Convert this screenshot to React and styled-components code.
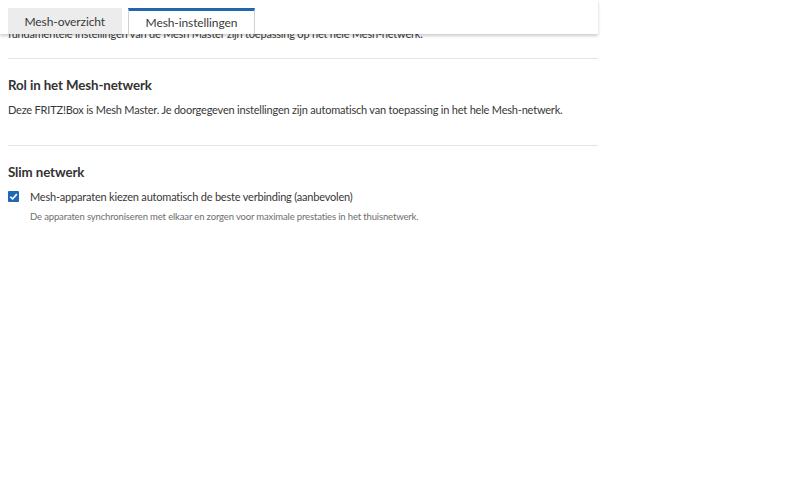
import React from 'react';
import styled, { createGlobalStyle } from 'styled-components';

const GlobalStyle = createGlobalStyle`
  html, body {
    margin: 0;
    padding: 0;
    background: #fff;
  }
  body {
    font-family: Lato, "Liberation Sans", sans-serif;
    color: #3c3c3c;
  }
`;

const Page = styled.div`
  position: relative;
  width: 800px;
  height: 497px;
  overflow: hidden;
`;

const Header = styled.div`
  position: absolute;
  top: 0;
  left: 0;
  width: 598px;
  height: 34px;
  background: #fff;
  box-shadow: 0 2px 3px rgba(0, 0, 0, 0.2);
  display: flex;
  align-items: flex-end;
  gap: 6px;
  padding-left: 8px;
  box-sizing: border-box;
  z-index: 2;
`;

const Tab = styled.div`
  height: 26px;
  box-sizing: border-box;
  padding: 0 ${(p) => (p.active ? '17px' : '16.5px')};
  display: flex;
  align-items: center;
  font-size: 12px;
  letter-spacing: -0.1px;
  color: #3a3a3a;
  background: ${(p) => (p.active ? '#fff' : '#ececec')};
  border-left: ${(p) => (p.active ? '1px solid #d2d2d2' : 'none')};
  border-right: ${(p) => (p.active ? '1px solid #d2d2d2' : 'none')};
  border-top: ${(p) => (p.active ? '3px solid #2266b0' : 'none')};
`;

const Content = styled.div`
  width: 590px;
  padding-left: 8px;
  padding-top: 26px;
`;

const Section = styled.section`
  border-bottom: ${(p) => (p.last ? 'none' : '1px solid #e4e4e4')};
  padding-bottom: ${(p) => p.pb || 0}px;
`;

const Text = styled.p`
  margin: ${(p) => p.mt || 0}px 0 0;
  font-size: 11px;
  letter-spacing: -0.2px;
  line-height: 16px;
  white-space: nowrap;
  color: #383838;
`;

const Heading = styled.h2`
  margin: 17px 0 0;
  font-size: 13.3px;
  font-weight: 700;
  line-height: 18px;
  letter-spacing: -0.1px;
  color: #333;
`;

const CheckRow = styled.label`
  display: flex;
  align-items: center;
  gap: 11px;
  margin-top: 7px;
  height: 16px;
  font-size: 11px;
  letter-spacing: -0.2px;
  color: #383838;
`;

const Box = styled.span`
  width: 11px;
  height: 11px;
  border-radius: 1px;
  background: #1f68b3;
  display: flex;
  align-items: center;
  justify-content: center;
`;

const Hint = styled.div`
  margin: 6px 0 0 22px;
  line-height: 14px;
  font-size: 9.5px;
  letter-spacing: -0.15px;
  color: #6e6e6e;
`;

export default function App() {
  return (
    <Page>
      <GlobalStyle />
      <Header>
        <Tab>Mesh-overzicht</Tab>
        <Tab active>Mesh-instellingen</Tab>
      </Header>
      <Content>
        <Section pb={16}>
          <Text>fundamentele instellingen van de Mesh Master zijn toepassing op het hele Mesh-netwerk.</Text>
        </Section>
        <Section pb={27}>
          <Heading>Rol in het Mesh-netwerk</Heading>
          <Text mt={8}>
            Deze FRITZ!Box is Mesh Master. Je doorgegeven instellingen zijn automatisch van toepassing in het hele Mesh-netwerk.
          </Text>
        </Section>
        <Section last>
          <Heading>Slim netwerk</Heading>
          <CheckRow>
            <Box>
              <svg width="9" height="9" viewBox="0 0 10 10">
                <path d="M1.4 5.3 L4 7.7 L8.7 2.4" fill="none" stroke="#fff" strokeWidth="1.8" />
              </svg>
            </Box>
            Mesh-apparaten kiezen automatisch de beste verbinding (aanbevolen)
          </CheckRow>
          <Hint>De apparaten synchroniseren met elkaar en zorgen voor maximale prestaties in het thuisnetwerk.</Hint>
        </Section>
      </Content>
    </Page>
  );
}
